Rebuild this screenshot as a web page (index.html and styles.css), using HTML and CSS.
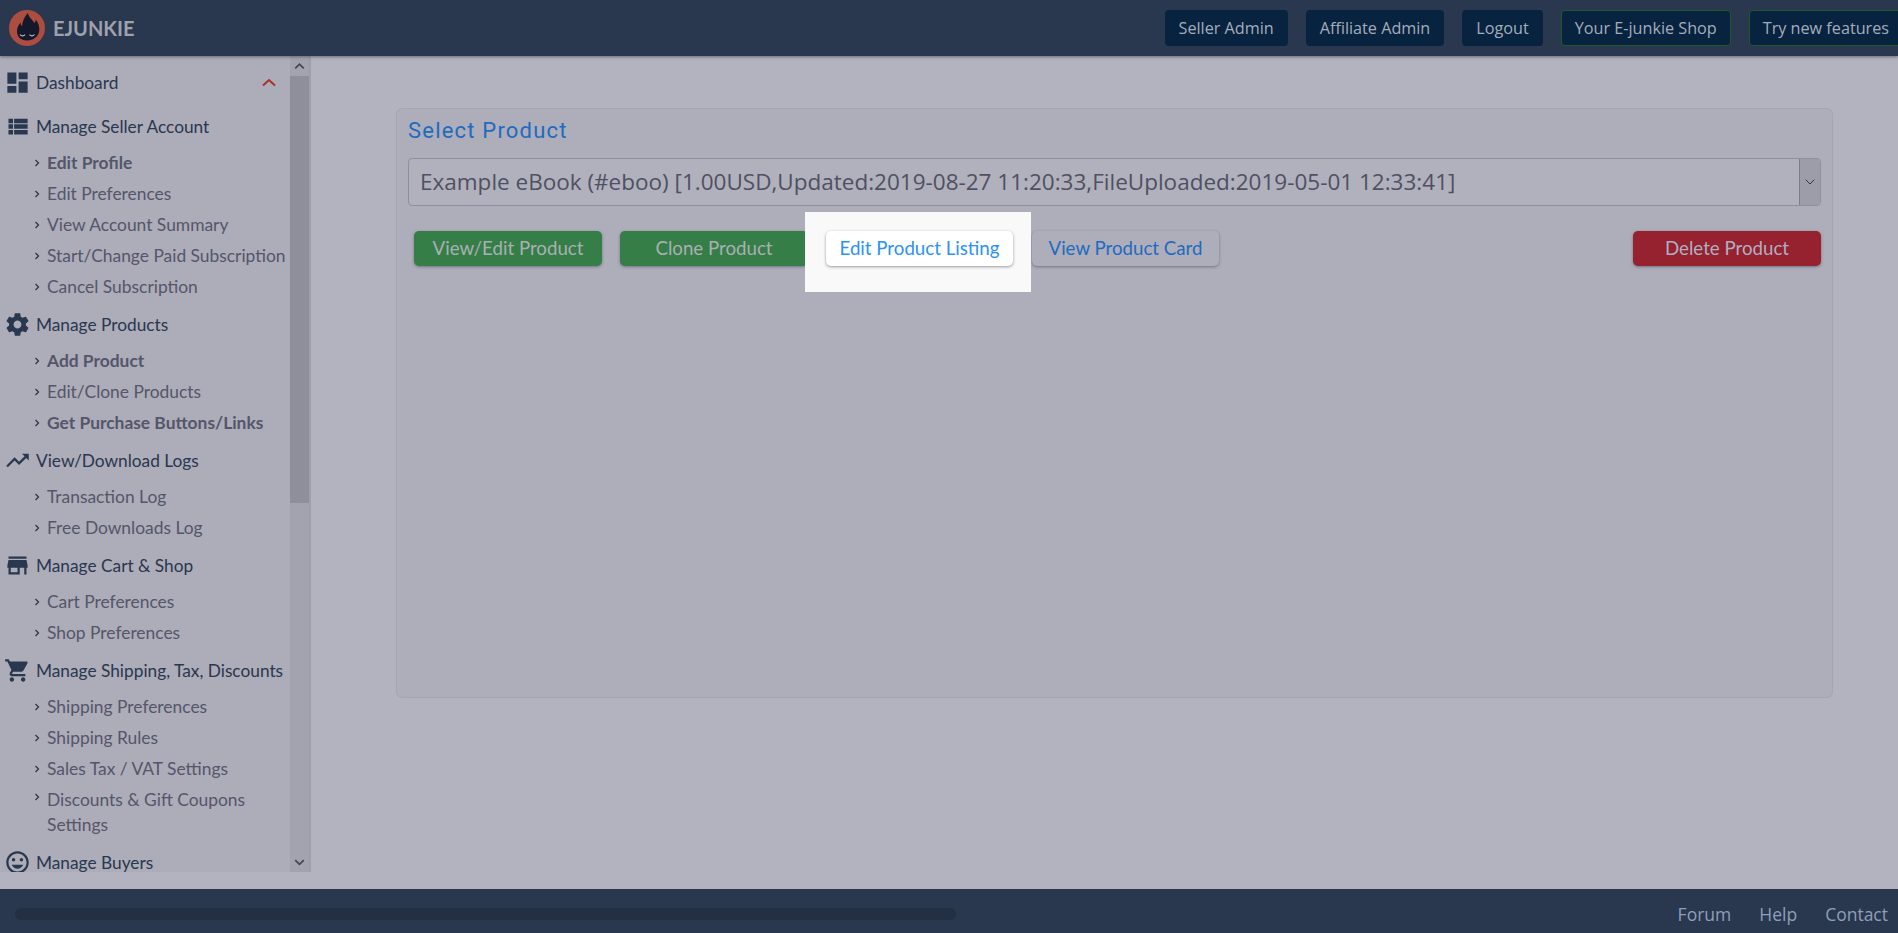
FILE: index.html
```html
<!DOCTYPE html>
<html lang="en">
<head>
<meta charset="utf-8">
<title>E-junkie</title>
<link rel="stylesheet" href="styles.css">
</head>
<body>
<svg class="defs" width="0" height="0" aria-hidden="true">
  <symbol id="i-dash" viewBox="0 0 24 24"><path d="M3 13h8V3H3v10zm0 8h8v-6H3v6zm10 0h8V11h-8v10zm0-18v6h8V3h-8z"/></symbol>
  <symbol id="i-list" viewBox="0 0 24 24"><path d="M4 14h4v-4H4v4zm0 5h4v-4H4v4zM4 9h4V5H4v4zm5 5h12v-4H9v4zm0 5h12v-4H9v4zM9 5v4h12V5H9z"/></symbol>
  <symbol id="i-gear" viewBox="0 0 24 24"><path d="M19.43 12.98c.04-.32.07-.64.07-.98s-.03-.66-.07-.98l2.11-1.65c.19-.15.24-.42.12-.64l-2-3.46c-.12-.22-.39-.3-.61-.22l-2.49 1c-.52-.4-1.08-.73-1.69-.98l-.38-2.65C14.46 2.18 14.25 2 14 2h-4c-.25 0-.46.18-.49.42l-.38 2.65c-.61.25-1.17.59-1.69.98l-2.49-1c-.23-.09-.49 0-.61.22l-2 3.46c-.13.22-.07.49.12.64l2.11 1.65c-.04.32-.07.65-.07.98s.03.66.07.98l-2.11 1.65c-.19.15-.24.42-.12.64l2 3.46c.12.22.39.3.61.22l2.49-1c.52.4 1.08.73 1.69.98l.38 2.65c.03.24.24.42.49.42h4c.25 0 .46-.18.49-.42l.38-2.65c.61-.25 1.17-.59 1.69-.98l2.49 1c.23.09.49 0 .61-.22l2-3.46c.12-.22.07-.49-.12-.64l-2.11-1.65zM12 15.5c-1.93 0-3.5-1.57-3.5-3.5s1.57-3.5 3.5-3.5 3.5 1.57 3.5 3.5-1.57 3.5-3.5 3.5z"/></symbol>
  <symbol id="i-trend" viewBox="0 0 24 24"><path d="M16 6l2.29 2.29-4.88 4.88-4-4L2 16.59 3.41 18l6-6 4 4 6.3-6.29L22 12V6z"/></symbol>
  <symbol id="i-store" viewBox="0 0 24 24"><path d="M20 4H4v2h16V4zm1 10v-2l-1-5H4l-1 5v2h1v6h10v-6h4v6h2v-6h1zm-9 4H6v-4h6v4z"/></symbol>
  <symbol id="i-cart" viewBox="0 0 24 24"><path d="M7 18c-1.1 0-1.99.9-1.99 2S5.9 22 7 22s2-.9 2-2-.9-2-2-2zM1 2v2h2l3.6 7.59-1.35 2.45c-.16.28-.25.61-.25.96 0 1.1.9 2 2 2h12v-2H7.42c-.14 0-.25-.11-.25-.25l.03-.12.9-1.63h7.45c.75 0 1.41-.41 1.75-1.03l3.58-6.49c.08-.14.12-.31.12-.48 0-.55-.45-1-1-1H5.21l-.94-2H1zm16 16c-1.1 0-1.99.9-1.99 2s.89 2 1.99 2 2-.9 2-2-.9-2-2-2z"/></symbol>
  <symbol id="i-face" viewBox="0 0 24 24"><path d="M11.99 2C6.47 2 2 6.48 2 12s4.47 10 9.99 10C17.52 22 22 17.52 22 12S17.52 2 11.99 2zM12 20c-4.42 0-8-3.58-8-8s3.58-8 8-8 8 3.58 8 8-3.58 8-8 8zm3.5-9c.83 0 1.5-.67 1.5-1.5S16.33 8 15.5 8 14 8.67 14 9.5s.67 1.5 1.5 1.5zm-7 0c.83 0 1.5-.67 1.5-1.5S9.33 8 8.5 8 7 8.67 7 9.5 7.67 11 8.5 11zm3.5 6.5c2.33 0 4.31-1.46 5.11-3.5H6.89c.8 2.04 2.78 3.5 5.11 3.5z"/></symbol>
  <symbol id="i-chev" viewBox="0 0 6 8"><path d="M1.5 1l3 3-3 3" fill="none" stroke="currentColor" stroke-width="1.2"/></symbol>
</svg>

<header class="topbar">
  <a class="brand" href="#">
    <svg class="logo" viewBox="0 0 36 36" aria-hidden="true">
      <circle cx="18" cy="18" r="18" fill="#ad4d3f"/>
      <path d="M19 3c.5 4 4 6.500 6.500 10 .8-1 1.200-2 1.300-3.500 2.700 3.500 3.900 7.500 3.400 11.500-.7 5.500-5.700 9.500-12.200 9.500S8 27 8 21c0-3.500 1.500-6 3.500-8.500.2 1.700.6 2.800 1.500 3.800C13.500 11 15.500 6.500 19 3z" fill="#14182a"/>
      <path d="M11 24.500c1.200 1.700 3.800 1.700 5 .2M20.500 24.700c1.200 1.500 3.800 1.500 5-.2" fill="none" stroke="#b5b5c0" stroke-width="1.200"/>
    </svg>
    <span class="brand-name">EJUNKIE</span>
  </a>
  <nav class="top-nav">
    <a class="top-btn" href="#">Seller Admin</a>
    <a class="top-btn" href="#">Affiliate Admin</a>
    <a class="top-btn" href="#">Logout</a>
    <a class="top-btn top-btn-green" href="#">Your E-junkie Shop</a>
    <a class="top-btn top-btn-green" href="#">Try new features</a>
  </nav>
</header>

<div class="middle">
  <aside class="sidebar">
    <div class="menu">
      <a class="head head-first" href="#"><svg class="icon"><use href="#i-dash"/></svg><span>Dashboard</span>
        <svg class="caret" viewBox="0 0 14 9" aria-hidden="true"><path d="M1 7.500l6-5.500 6 5.500" fill="none" stroke="#a93226" stroke-width="2"/></svg></a>

      <a class="head" href="#"><svg class="icon"><use href="#i-list"/></svg><span>Manage Seller Account</span></a>
      <a class="sub sub-bold" href="#"><svg class="chev"><use href="#i-chev"/></svg>Edit Profile</a>
      <a class="sub" href="#"><svg class="chev"><use href="#i-chev"/></svg>Edit Preferences</a>
      <a class="sub" href="#"><svg class="chev"><use href="#i-chev"/></svg>View Account Summary</a>
      <a class="sub" href="#"><svg class="chev"><use href="#i-chev"/></svg>Start/Change Paid Subscription</a>
      <a class="sub" href="#"><svg class="chev"><use href="#i-chev"/></svg>Cancel Subscription</a>

      <a class="head" href="#"><svg class="icon"><use href="#i-gear"/></svg><span>Manage Products</span></a>
      <a class="sub sub-bold" href="#"><svg class="chev"><use href="#i-chev"/></svg>Add Product</a>
      <a class="sub" href="#"><svg class="chev"><use href="#i-chev"/></svg>Edit/Clone Products</a>
      <a class="sub sub-bold" href="#"><svg class="chev"><use href="#i-chev"/></svg>Get Purchase Buttons/Links</a>

      <a class="head" href="#"><svg class="icon"><use href="#i-trend"/></svg><span>View/Download Logs</span></a>
      <a class="sub" href="#"><svg class="chev"><use href="#i-chev"/></svg>Transaction Log</a>
      <a class="sub" href="#"><svg class="chev"><use href="#i-chev"/></svg>Free Downloads Log</a>

      <a class="head" href="#"><svg class="icon"><use href="#i-store"/></svg><span>Manage Cart &amp; Shop</span></a>
      <a class="sub" href="#"><svg class="chev"><use href="#i-chev"/></svg>Cart Preferences</a>
      <a class="sub" href="#"><svg class="chev"><use href="#i-chev"/></svg>Shop Preferences</a>

      <a class="head" href="#"><svg class="icon"><use href="#i-cart"/></svg><span>Manage Shipping, Tax, Discounts</span></a>
      <a class="sub" href="#"><svg class="chev"><use href="#i-chev"/></svg>Shipping Preferences</a>
      <a class="sub" href="#"><svg class="chev"><use href="#i-chev"/></svg>Shipping Rules</a>
      <a class="sub" href="#"><svg class="chev"><use href="#i-chev"/></svg>Sales Tax / VAT Settings</a>
      <a class="sub sub-wrap" href="#"><svg class="chev"><use href="#i-chev"/></svg>Discounts &amp; Gift Coupons Settings</a>

      <a class="head" href="#"><svg class="icon"><use href="#i-face"/></svg><span>Manage Buyers</span></a>
    </div>
    <div class="vscroll">
      <svg class="sc-arrow" viewBox="0 0 20 20" aria-hidden="true"><path d="M5.500 12.500L10 8l4.500 4.500" fill="none" stroke="#44454f" stroke-width="1.800"/></svg>
      <div class="thumb"></div>
      <div class="track"></div>
      <svg class="sc-arrow" viewBox="0 0 20 20" aria-hidden="true"><path d="M5.500 8L10 12.500 14.500 8" fill="none" stroke="#44454f" stroke-width="1.800"/></svg>
    </div>
  </aside>

  <main class="content">
    <section class="panel">
      <h2 class="panel-title">Select Product</h2>
      <div class="select">
        <span class="select-text">Example eBook (#eboo) [1.00USD,Updated:2019-08-27 11:20:33,FileUploaded:2019-05-01 12:33:41]</span>
        <span class="select-arrow"><svg viewBox="0 0 10 6" aria-hidden="true"><path d="M.7.7L5 5 9.300.7" fill="none" stroke="#33343f" stroke-width="1"/></svg></span>
      </div>
      <div class="actions">
        <a class="btn btn-green" href="#">View/Edit Product</a>
        <a class="btn btn-green" href="#">Clone Product</a>
        <div class="spot"><a class="btn btn-white" href="#">Edit Product Listing</a></div>
        <a class="btn btn-grey" href="#">View Product Card</a>
        <a class="btn btn-red" href="#">Delete Product</a>
      </div>
    </section>
  </main>
</div>

<footer class="footer">
  <div class="hscroll"></div>
  <nav class="foot-nav">
    <a href="#">Forum</a>
    <a href="#">Help</a>
    <a href="#">Contact</a>
  </nav>
</footer>
</body>
</html>
```

FILE: styles.css
```css
* { box-sizing: border-box; }
html, body { height: 100%; }
body {
  margin: 0;
  height: 933px;
  overflow: hidden;
  display: flex;
  flex-direction: column;
  background: #b3b2bf;
  font-family: "Lato", sans-serif;
}
a { text-decoration: none; color: inherit; }
.defs { position: absolute; }

.topbar {
  height: 56px;
  flex: none;
  background: #29374f;
  box-shadow: 0 1px 3px rgba(50, 50, 65, .55);
  display: flex;
  justify-content: space-between;
  align-items: center;
  position: relative;
  z-index: 2;
}
.brand { display: flex; align-items: center; gap: 8px; padding-left: 9px; }
.logo { width: 36px; height: 36px; }
.brand-name { font-size: 20px; font-weight: 700; color: #9fa1ad; }
.top-nav { display: flex; gap: 18px; flex: none; margin-right: -5px; }
.top-btn {
  height: 36px;
  padding: 0 14px;
  border-radius: 4px;
  background: #07233f;
  color: #a5adbb;
  font-family: "Open Sans", sans-serif;
  font-size: 16.200px;
  line-height: 36px;
  white-space: nowrap;
}
.top-btn-green { border: 1px solid #1f5a26; padding: 0 13px; line-height: 34px; }

.middle { flex: 1; display: flex; min-height: 0; }
.sidebar {
  width: 311px;
  height: 816px;
  flex: none;
  display: flex;
  background: #adacb9;
  border-right: 2px solid #9f9eac;
  overflow: hidden;
}
.menu {
  width: 290px;
  flex: none;
  display: flex;
  flex-direction: column;
  overflow: hidden;
  padding-top: 8px;
}
.head {
  height: 36px;
  flex: none;
  margin: 4px 0 3px;
  padding-left: 4px;
  display: flex;
  align-items: center;
  gap: 5px;
  color: #29374f;
  font-size: 17.300px;
  white-space: nowrap;
}
.head-first { margin: 0 0 4px; }
.icon { width: 27px; height: 27px; fill: #29374f; flex: none; }
.caret { width: 14px; height: 9px; margin-left: auto; margin-right: 14px; }
.sub {
  display: block;
  flex: none;
  position: relative;
  padding: 0 0 0 47px;
  color: #54566a;
  font-size: 17.400px;
  line-height: 31px;
  white-space: nowrap;
}
.sub-bold { font-weight: 700; }
.sub-wrap { white-space: normal; line-height: 25px; padding-top: 3px; padding-bottom: 3px; width: 270px; }
.chev { position: absolute; left: 34px; top: 12px; width: 6px; height: 8px; color: #30313d; }
.sub-wrap .chev { top: 9px; }

.vscroll { width: 19px; flex: none; display: flex; flex-direction: column; background: #a3a3b0; }
.sc-arrow { width: 19px; height: 20px; flex: none; }
.thumb { height: 427px; flex: none; background: #8f8e9b; }
.track { flex: 1; }

.content { flex: 1; min-width: 0; padding: 52px 65px 0 85px; }
.panel {
  height: 590px;
  padding: 7px 11px 0;
  background: #aeadba;
  border: 1px solid #a6a5b2;
  border-radius: 6px;
}
.panel-title {
  margin: 0;
  font-family: "Roboto", sans-serif;
  font-size: 22px;
  font-weight: 400;
  letter-spacing: 1.200px;
  line-height: 30px;
  color: #1f6bc0;
}
.select {
  margin-top: 12px;
  height: 48px;
  display: flex;
  align-items: center;
  justify-content: space-between;
  background: #b1b0bd;
  border: 1px solid #8f8e9e;
  border-radius: 4px;
  overflow: hidden;
}
.select-text {
  padding-left: 11px;
  margin-top: -2px;
  font-family: "Open Sans", sans-serif;
  font-size: 22.500px;
  color: #4f5061;
  white-space: nowrap;
}
.select-arrow {
  width: 21px;
  height: 100%;
  display: flex;
  align-items: center;
  justify-content: center;
  background: #9d9ca9;
  border-left: 1px solid #7e7d8c;
}
.select-arrow svg { width: 10px; height: 6px; }
.actions { display: flex; align-items: flex-start; margin-top: 6px; padding-left: 6px; }
.btn {
  width: 188px;
  height: 35px;
  flex: none;
  margin-top: 19px;
  border-radius: 5px;
  font-size: 18.700px;
  line-height: 35px;
  text-align: center;
  white-space: nowrap;
  box-shadow: 0 1px 3px rgba(60, 60, 75, .5);
}
.btn-green { background: #367e48; color: #a9b0b2; margin-right: 18px; }
.spot {
  width: 226px;
  height: 80px;
  margin-left: -21px;
  padding-left: 21px;
  flex: none;
  display: flex;
  align-items: flex-start;
  background: #f9f9f9;
  position: relative;
  z-index: 1;
}
.btn-white { width: 187px; background: #fff; color: #2a93f5; }
.btn-grey { width: 187px; background: #aeadba; color: #1f6bc0; margin-left: 1px; }
.btn-red { background: #96222f; color: #b0aec2; margin-left: auto; }

.footer {
  height: 44px;
  flex: none;
  margin-top: auto;
  background: #29374f;
  display: flex;
  align-items: center;
  justify-content: space-between;
  padding: 6px 10px 0 15px;
}
.hscroll { width: 941px; height: 12px; border-radius: 6px; background: #232f42; }
.foot-nav {
  display: flex;
  gap: 28px;
  font-family: "Open Sans", sans-serif;
  font-size: 17.500px;
  color: #8e9fb9;
}
```
